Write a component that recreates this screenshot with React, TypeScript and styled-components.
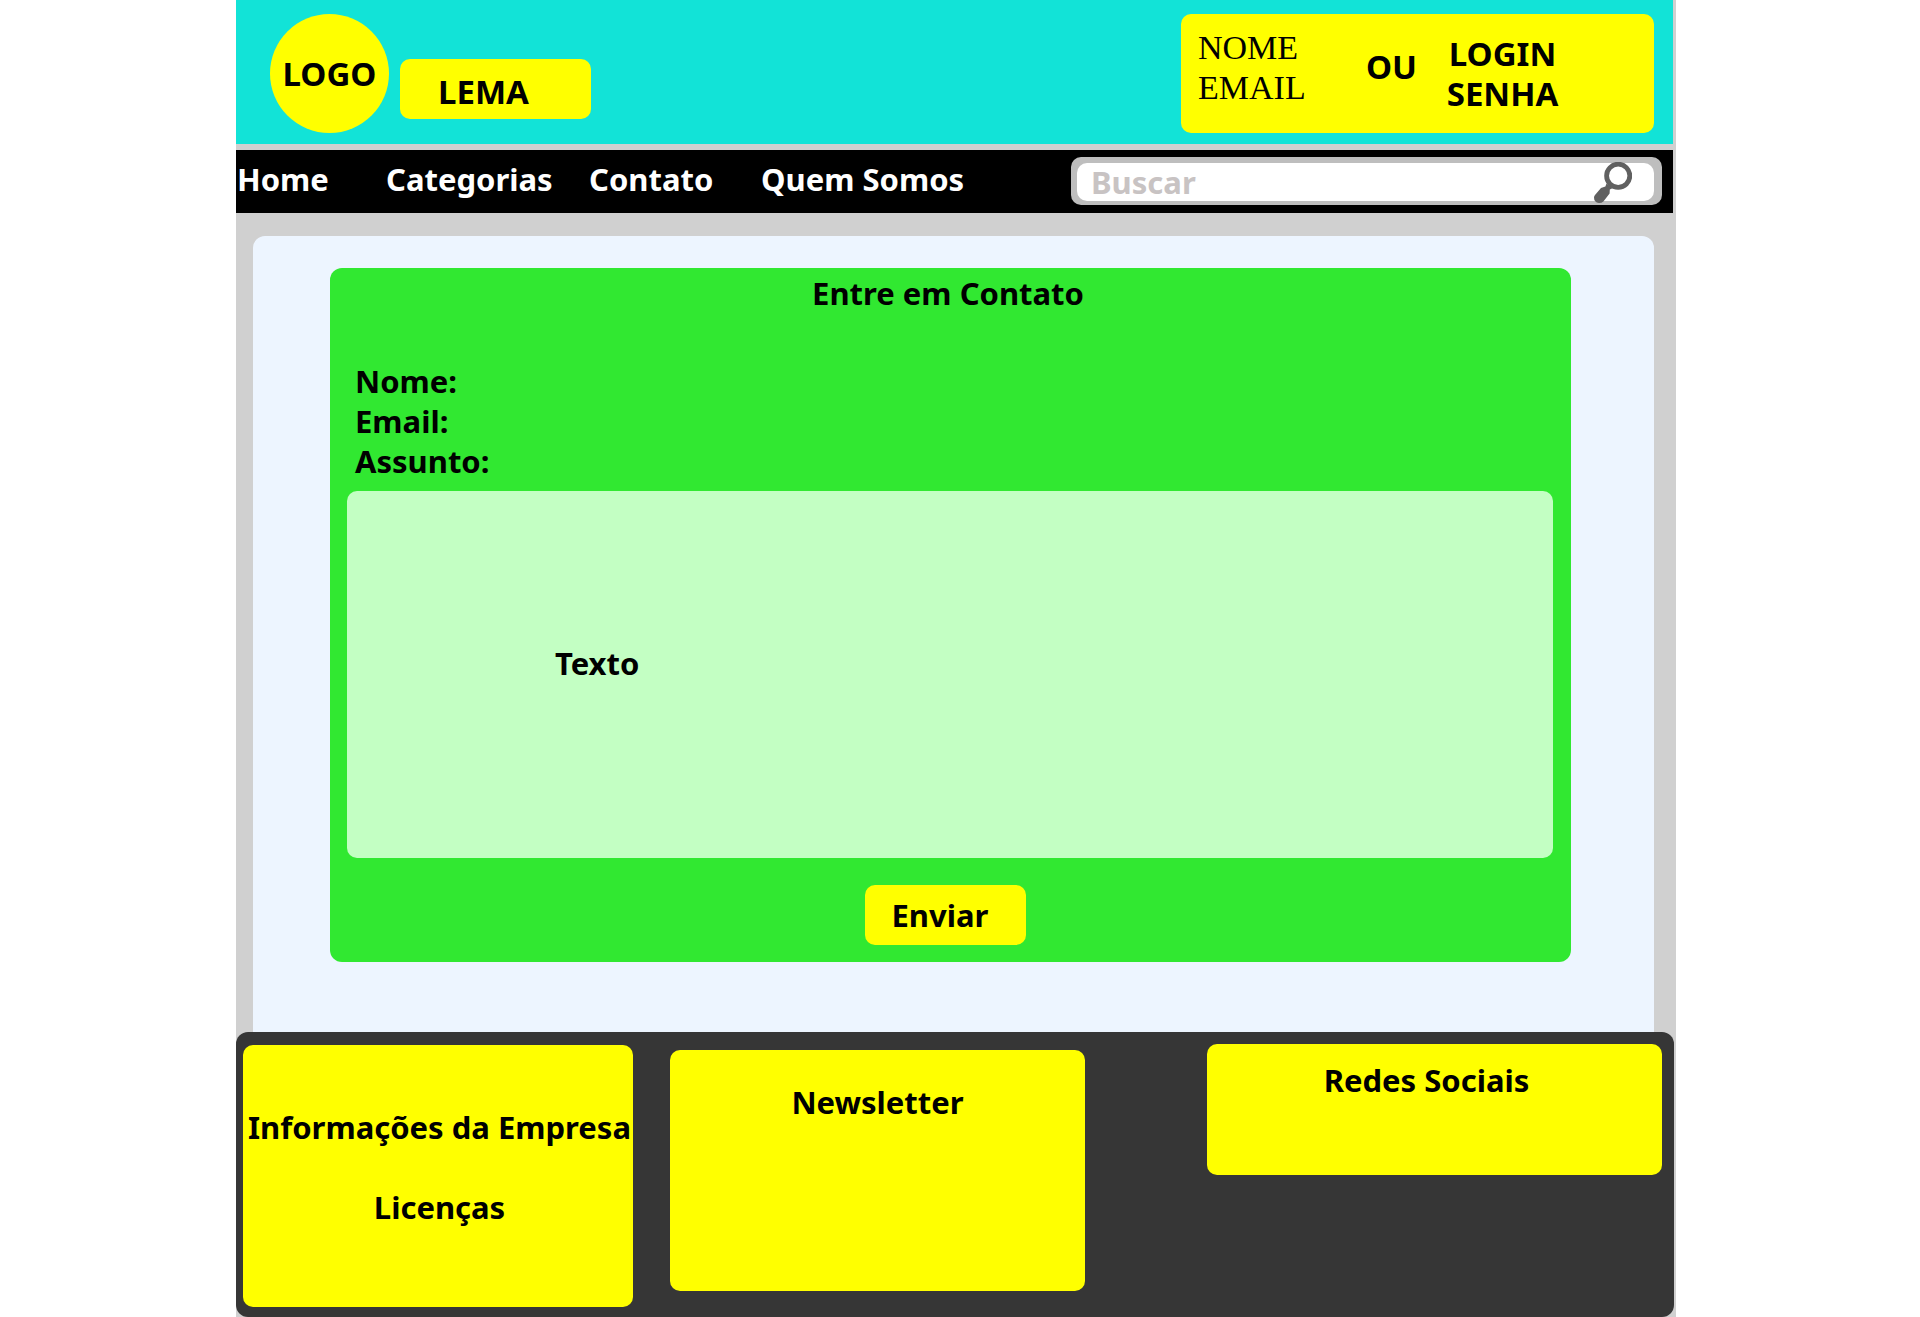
import React from 'react';
import styled, { createGlobalStyle } from 'styled-components';

const sans = '"Noto Sans", "Open Sans", sans-serif';
const serif = '"Liberation Serif", "Times New Roman", serif';

const color = {
  page: '#d0d0d0',
  header: '#12e3d7',
  accent: '#ffff00',
  panel: '#edf5ff',
  form: '#31e831',
  message: '#c3ffc3',
  footer: '#363636',
};

const GlobalStyle = createGlobalStyle`
  *, *::before, *::after { box-sizing: border-box; }
  body { margin: 0; background: #fff; color: #000; font: 700 31px/40px ${sans}; }
  h2, p { margin: 0; font: inherit; }
  input, textarea, button { margin: 0; padding: 0; border: 0; font: inherit; color: inherit; background: none; }
`;

const Frame = styled.div`
  display: grid;
  grid-template-columns: 236fr minmax(0, 1440fr) 244fr;
`;

const Page = styled.div`
  grid-column: 2;
  background: ${color.page};
`;

const Header = styled.header`
  display: flex;
  align-items: flex-start;
  min-height: 144px;
  margin: 0 3px 6px 0;
  padding: 14px 19px 11px 34px;
  background: ${color.header};
  font-size: 33px;
`;

const Logo = styled.a`
  display: flex;
  align-items: center;
  justify-content: center;
  width: 119px;
  height: 119px;
  border-radius: 50%;
  background: ${color.accent};
  color: inherit;
  text-decoration: none;
`;

const Tagline = styled.p`
  width: 191px;
  height: 60px;
  margin: 45px auto 0 11px;
  padding: 13px 38px;
  border-radius: 10px;
  background: ${color.accent};
`;

const Account = styled.form`
  display: grid;
  grid-template-columns: 168px 77px 1fr;
  width: 473px;
  height: 119px;
  padding: 14px 17px;
  border-radius: 10px;
  background: ${color.accent};
`;

const SignUp = styled.div`
  font-family: ${serif};
  font-weight: 400;
  font-size: 34px;
`;

const Or = styled.span`
  padding-top: 19px;
`;

const SignIn = styled.div`
  padding-top: 6px;
`;

const Field = styled.div`
  display: flex;
`;

const Label = styled.label<{ $width?: number }>`
  flex: none;
  width: ${({ $width }) => ($width ? `${$width}px` : 'auto')};
  text-align: center;
`;

const TextInput = styled.input`
  flex: 1;
  min-width: 0;
  height: 40px;
  outline: none;
`;

const Nav = styled.nav`
  display: flex;
  justify-content: space-between;
  min-height: 63px;
  margin-right: 3px;
  padding: 7px 11px 8px 1px;
  background: #000;
`;

const Menu = styled.div`
  display: grid;
  grid-template-columns: 149px 203px 172px auto;
  padding-top: 2px;
`;

const MenuLink = styled.a`
  color: #fff;
  text-decoration: none;
  white-space: nowrap;
`;

const Search = styled.form`
  width: 591px;
  height: 48px;
  padding: 6px 8px 4px 6px;
  border-radius: 10px;
  background: #bebebe;
`;

const SearchBox = styled.div`
  display: flex;
  height: 38px;
  padding: 0 22px 0 14px;
  border-radius: 10px;
  background: #fff;
`;

const SearchInput = styled.input`
  flex: 1;
  min-width: 0;
  height: 38px;
  outline: none;
  &::placeholder { color: #c8c3c3; opacity: 1; }
`;

const SearchButton = styled.button`
  width: 38px;
  height: 41px;
  margin-top: -1px;
  cursor: pointer;
  svg { display: block; }
`;

const Main = styled.main`
  margin: 23px 22px 0 17px;
  padding: 32px 83px 70px 77px;
  border-radius: 12px 12px 0 0;
  background: ${color.panel};
`;

const ContactForm = styled.form`
  padding: 5px 18px 17px 17px;
  border-radius: 12px;
  background: ${color.form};
`;

const Title = styled.h2`
  margin-bottom: 48px;
  padding-right: 4px;
  text-align: center;
`;

const Fields = styled.div`
  padding: 0 8px;
`;

const Message = styled.textarea`
  display: block;
  width: 100%;
  height: 367px;
  margin: 10px 0 27px;
  padding: 152px 208px;
  border-radius: 10px;
  background: ${color.message};
  resize: none;
  outline: none;
  &::placeholder { color: #000; opacity: 1; }
`;

const Actions = styled.div`
  display: flex;
  justify-content: center;
  padding-right: 10px;
`;

const SubmitButton = styled.button`
  width: 161px;
  height: 60px;
  padding-left: 27px;
  border-radius: 10px;
  background: ${color.accent};
  text-align: left;
  cursor: pointer;
`;

const Footer = styled.footer`
  display: grid;
  grid-template-columns: minmax(0, 390fr) 37fr minmax(0, 415fr) 122fr minmax(0, 455fr);
  align-items: start;
  min-height: 285px;
  margin-right: 2px;
  padding: 12px 12px 10px 7px;
  border-radius: 12px;
  background: ${color.footer};
`;

const FooterCard = styled.section<{ $column: number; $height: number; $top: number; $inset: string }>`
  grid-column: ${({ $column }) => $column};
  height: ${({ $height }) => $height}px;
  margin-top: ${({ $top }) => $top}px;
  padding: ${({ $inset }) => $inset};
  border-radius: 10px;
  background: ${color.accent};
  text-align: center;
  white-space: nowrap;
`;

const FooterText = styled.p`
  & + & { margin-top: 40px; }
`;

const SearchIcon = () => (
  <svg width="38" height="41" viewBox="0 0 38 41" fill="none" aria-hidden="true">
    <circle cx="24.2" cy="13.8" r="11.6" stroke="#606060" strokeWidth="4.8" />
    <path
      d="M12.5 21.5 L18.5 26.2 L15.8 27.4 L15.6 31.4 L9.4 39.4 Q7.8 41 5 41 Q0 40.6 0 35.6 Q0 34.2 1 33 L7 26 L11.4 24.4 Z"
      fill="#606060"
    />
  </svg>
);

export default function App() {
  return (
    <Frame>
      <GlobalStyle />
      <Page>
        <Header>
          <Logo href="#">LOGO</Logo>
          <Tagline>LEMA</Tagline>
          <Account>
            <SignUp>
              <Field>
                <Label htmlFor="signup-name">NOME</Label>
                <TextInput id="signup-name" />
              </Field>
              <Field>
                <Label htmlFor="signup-email">EMAIL</Label>
                <TextInput id="signup-email" type="email" />
              </Field>
            </SignUp>
            <Or>OU</Or>
            <SignIn>
              <Field>
                <Label htmlFor="login" $width={119}>LOGIN</Label>
                <TextInput id="login" />
              </Field>
              <Field>
                <Label htmlFor="password" $width={119}>SENHA</Label>
                <TextInput id="password" type="password" />
              </Field>
            </SignIn>
          </Account>
        </Header>

        <Nav>
          <Menu>
            <MenuLink href="#">Home</MenuLink>
            <MenuLink href="#">Categorias</MenuLink>
            <MenuLink href="#">Contato</MenuLink>
            <MenuLink href="#">Quem Somos</MenuLink>
          </Menu>
          <Search role="search">
            <SearchBox>
              <SearchInput placeholder="Buscar" aria-label="Buscar" />
              <SearchButton type="button" aria-label="Buscar">
                <SearchIcon />
              </SearchButton>
            </SearchBox>
          </Search>
        </Nav>

        <Main>
          <ContactForm>
            <Title>Entre em Contato</Title>
            <Fields>
              <Field>
                <Label htmlFor="name">Nome:</Label>
                <TextInput id="name" />
              </Field>
              <Field>
                <Label htmlFor="email">Email:</Label>
                <TextInput id="email" type="email" />
              </Field>
              <Field>
                <Label htmlFor="subject">Assunto:</Label>
                <TextInput id="subject" />
              </Field>
            </Fields>
            <Message placeholder="Texto" aria-label="Texto" />
            <Actions>
              <SubmitButton type="button">Enviar</SubmitButton>
            </Actions>
          </ContactForm>
        </Main>

        <Footer>
          <FooterCard $column={1} $height={262} $top={1} $inset="62px 0 0 3px">
            <FooterText>Informações da Empresa</FooterText>
            <FooterText>Licenças</FooterText>
          </FooterCard>
          <FooterCard $column={3} $height={241} $top={6} $inset="32px 0 0">
            <FooterText>Newsletter</FooterText>
          </FooterCard>
          <FooterCard $column={5} $height={131} $top={0} $inset="16px 16px 0 0">
            <FooterText>Redes Sociais</FooterText>
          </FooterCard>
        </Footer>
      </Page>
    </Frame>
  );
}
